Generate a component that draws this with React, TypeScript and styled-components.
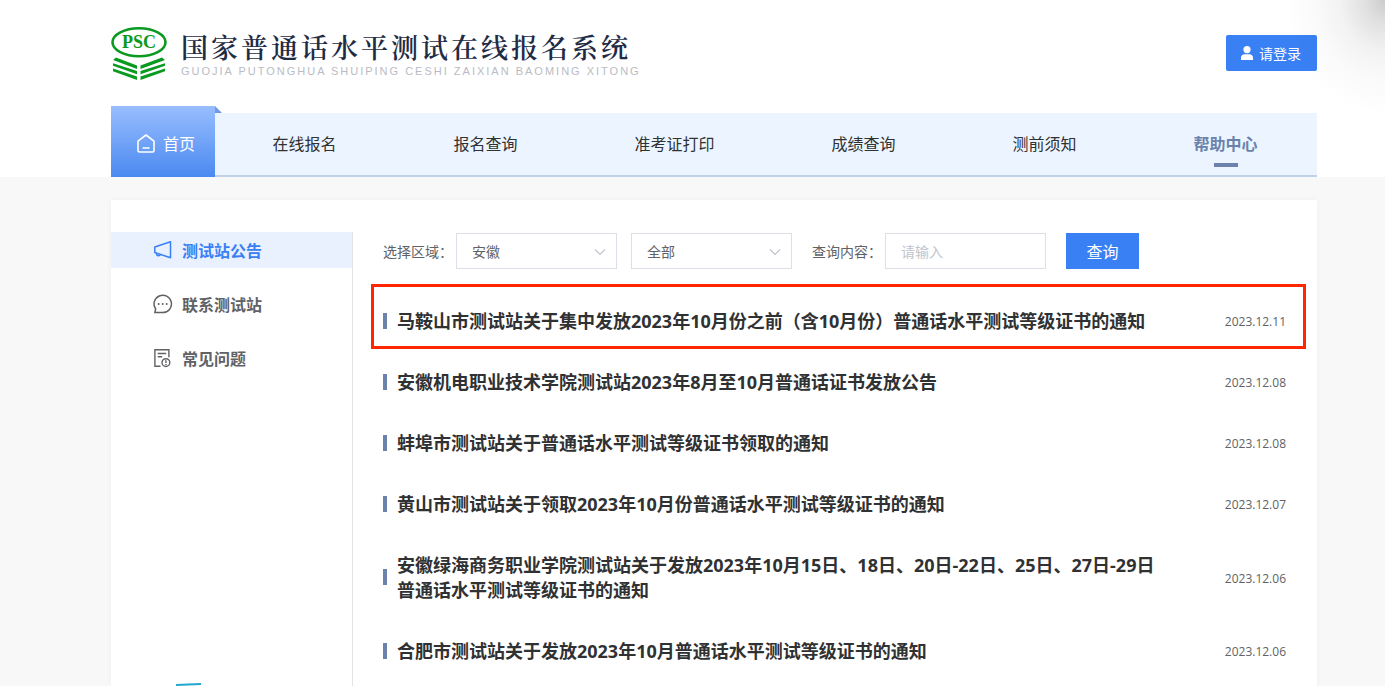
import React from "react";
import styled, { createGlobalStyle, css } from "styled-components";

const GlobalStyle = createGlobalStyle`
  *, *::before, *::after { box-sizing: border-box; }
  body {
    margin: 0;
    background: #f8f8f8;
    color: #303133;
    font-family: "Open Sans", "Noto Sans CJK SC", sans-serif;
    font-size: 14px;
  }
  button, input, select { font: inherit; }
`;

const Page = styled.div`
  position: relative;
  min-height: 100vh;
  display: flex;
  flex-direction: column;
`;

const Header = styled.header`
  padding: 26px 68px 0 111px;
  background: #fff;
`;

const HeaderTop = styled.div`
  display: flex;
  justify-content: space-between;
  align-items: flex-start;
  height: 80px;
`;

const Brand = styled.a`
  display: flex;
  gap: 14px;
  color: #1f2c45;
  text-decoration: none;
`;

const BrandText = styled.div`
  padding-top: 3px;
`;

const BrandTitle = styled.h1`
  margin: 0;
  font-family: "Noto Serif CJK SC", "Noto Sans CJK SC", serif;
  font-size: 27px;
  font-weight: 600;
  line-height: 36px;
  letter-spacing: 3px;
  white-space: nowrap;
`;

const BrandSub = styled.p`
  margin: 0;
  color: #b9bcc4;
  font-family: "Liberation Sans", Arial, sans-serif;
  font-size: 11px;
  line-height: 12px;
  letter-spacing: 2px;
  white-space: nowrap;
`;

const LoginButton = styled.button`
  display: flex;
  align-items: center;
  justify-content: center;
  gap: 6px;
  width: 91px;
  height: 36px;
  margin-top: 9px;
  padding: 0 1px 1px 0;
  border: 0;
  border-radius: 2px;
  background: #3980f4;
  color: #fff;
  cursor: pointer;
`;

const CornerShade = styled.div`
  position: absolute;
  top: 0;
  right: 0;
  width: 110px;
  height: 120px;
  pointer-events: none;
  background: radial-gradient(
    100px 115px at 100% 0,
    rgba(0, 0, 0, 0.2),
    rgba(0, 0, 0, 0.12) 20%,
    rgba(0, 0, 0, 0.05) 45%,
    rgba(0, 0, 0, 0.02) 70%,
    rgba(0, 0, 0, 0) 100%
  );
`;

const Nav = styled.nav`
  display: flex;
  align-items: flex-end;
`;

const HomeTab = styled.a`
  position: relative;
  display: flex;
  align-items: center;
  justify-content: center;
  gap: 8px;
  width: 104px;
  height: 71px;
  padding: 3px 0 0 6px;
  background: linear-gradient(#98beff, #4b89f0);
  color: #fff;
  font-size: 16px;
  text-decoration: none;

  &::after {
    content: "";
    position: absolute;
    top: 0;
    left: 100%;
    border-left: 7px solid #6f9be4;
    border-top: 7px solid transparent;
  }
`;

const NavList = styled.div`
  flex: 1;
  display: flex;
  height: 64px;
  border-bottom: 2px solid #bfd2e9;
  background: #ecf5ff;
`;

const NavLink = styled.a<{ $active?: boolean }>`
  position: relative;
  flex: 1 1 auto;
  display: flex;
  align-items: center;
  justify-content: center;
  padding: 0 2px 2px 0;
  color: #303133;
  font-size: 16px;
  text-decoration: none;

  ${(p) =>
    p.$active &&
    css`
      color: #6b82ac;
      font-weight: 700;

      &::after {
        content: "";
        position: absolute;
        bottom: 8px;
        width: 24px;
        height: 4px;
        background: #6b82ac;
      }
    `}
`;

const Panel = styled.main`
  flex: 1;
  display: flex;
  margin: 23px 68px 0 111px;
  padding-top: 32px;
  background: #fff;
  box-shadow: 0 0 6px rgba(0, 0, 0, 0.04);
`;

const Sidebar = styled.aside`
  display: flex;
  flex-direction: column;
  gap: 18px;
  flex: 0 0 242px;
  border-right: 1px solid #e4e4e4;
`;

const SideLink = styled.a<{ $active?: boolean }>`
  display: flex;
  align-items: center;
  gap: 9px;
  height: 36px;
  padding-left: 42px;
  background: ${(p) => (p.$active ? "#e9f1fe" : "transparent")};
  color: ${(p) => (p.$active ? "#3980f4" : "#606266")};
  font-size: 16px;
  font-weight: 700;
  text-decoration: none;
`;

const Content = styled.section`
  flex: 1;
  min-width: 0;
  padding: 1px 31px 0 30px;
`;

const Filters = styled.form`
  display: flex;
  align-items: center;
  gap: 20px;
`;

const FieldGroup = styled.div`
  display: flex;
  align-items: center;
  gap: 14px;
`;

const Field = styled.div`
  display: flex;
  align-items: center;
  gap: 3px;
`;

const Label = styled.label`
  color: #606266;
  white-space: nowrap;
`;

const SelectWrap = styled.div`
  position: relative;

  svg {
    position: absolute;
    top: 14px;
    right: 11px;
    pointer-events: none;
  }
`;

const control = css`
  display: block;
  width: 161px;
  height: 36px;
  padding: 0 15px;
  border: 1px solid #dcdfe6;
  border-radius: 0;
  background: #fff;
  color: #606266;
  outline: none;
`;

const Select = styled.select`
  ${control}
  appearance: none;
`;

const Input = styled.input`
  ${control}
  &::placeholder { color: #c0c4cc; }
`;

const SearchButton = styled.button`
  width: 73px;
  height: 36px;
  padding: 0 0 1px;
  border: 0;
  background: #3980f4;
  color: #fff;
  font-size: 16px;
  cursor: pointer;
`;

const NoticeList = styled.ul`
  margin: 22px 0 0;
  padding: 0;
  list-style: none;
`;

const Notice = styled.li<{ $marked?: boolean }>`
  position: relative;
  display: flex;
  align-items: center;
  padding: 18px 0;

  &::before {
    content: "";
    flex: none;
    width: 4px;
    height: 16px;
    margin: 0 10px 2px 0;
    background: #6b82ac;
  }

  ${(p) =>
    p.$marked &&
    css`
      &::after {
        content: "";
        position: absolute;
        inset: -7px -20px 3px -12px;
        border: 3px solid #ff2600;
        pointer-events: none;
      }
    `}
`;

const NoticeTitle = styled.a`
  flex: 1;
  padding-right: 56px;
  color: #303133;
  font-size: 18px;
  font-weight: 700;
  line-height: 25px;
  text-decoration: none;
`;

const NoticeDate = styled.time`
  flex: none;
  color: #606266;
  font-size: 12px;
`;

const FloatingArt = styled.svg`
  position: fixed;
  left: 176px;
  bottom: 0;
`;

const Logo = () => (
  <svg width="56" height="54" viewBox="0 0 56 54" aria-label="PSC" role="img">
    <ellipse cx="28" cy="16.300" rx="26.500" ry="14" fill="none" stroke="#0a9a20" strokeWidth="2.600" />
    <text x="28" y="22" textAnchor="middle" fontFamily="Liberation Serif, serif" fontWeight="700" fontSize="18" fill="#0a9a20">
      PSC
    </text>
    <path
      d="M5 31.500 26 39.500v3.500L2 34zM2 37.200 26 45v3.300L2 39.800zM2 42.500 26 50.500V54L2 45.200zM51 31.500 29.500 39.500v3.500L54 34zM54 37.200 29.500 45v3.300L54 39.800zM54 42.500 29.500 50.500V54L54 45.200z"
      fill="#0a9a20"
    />
  </svg>
);

const UserIcon = () => (
  <svg width="12" height="14" viewBox="0 0 12 14" fill="#fff" aria-hidden="true">
    <circle cx="6" cy="3.600" r="3.600" />
    <path d="M0 14v-2.200C0 9.600 1.600 8.300 3.600 8.300h4.800c2 0 3.600 1.300 3.600 3.500V14z" />
  </svg>
);

const HomeIcon = () => (
  <svg width="18" height="19" viewBox="0 0 18 19" fill="none" stroke="#fff" strokeWidth="1.600" strokeLinejoin="round" strokeLinecap="round" aria-hidden="true">
    <path d="M1 7.200 9 1l8 6.200V16.500a1.500 1.500 0 0 1-1.500 1.500h-13A1.500 1.500 0 0 1 1 16.500z" />
    <path d="M6 14h6" />
  </svg>
);

const HornIcon = () => (
  <svg width="20" height="20" viewBox="0 0 20 20" fill="none" stroke="currentColor" strokeWidth="1.500" strokeLinejoin="round" aria-hidden="true">
    <path d="M1.800 7 17.500 1.800v16L1.800 12.500z" />
    <path d="M3.500 13.200c0 2 .8 2.600 1.900 2.600s1.800-.7 1.800-1.500" />
  </svg>
);

const ChatIcon = () => (
  <svg width="20" height="20" viewBox="0 0 20 20" fill="none" stroke="currentColor" strokeWidth="1.500" aria-hidden="true">
    <path d="M9.700 18.600A8.700 8.700 0 1 0 2.700 15L1.800 18.600z" strokeLinejoin="round" />
    <g fill="currentColor" stroke="none">
      <circle cx="5.700" cy="9.900" r="1" />
      <circle cx="9.700" cy="9.900" r="1" />
      <circle cx="13.700" cy="9.900" r="1" />
    </g>
  </svg>
);

const FaqIcon = () => (
  <svg width="20" height="20" viewBox="0 0 20 20" fill="none" stroke="currentColor" strokeWidth="1.400" aria-hidden="true">
    <path d="M7.500 18.200H1.900V1.700h14v7.500M4.700 5.500h8.500M4.700 8.700h4.500" />
    <circle cx="12.900" cy="14.600" r="3.900" />
    <path d="M12.900 12.300v2.800M12.900 15.900v1.200" />
  </svg>
);

const Chevron = () => (
  <svg width="12" height="10" viewBox="0 0 12 10" fill="none" stroke="#c0c4cc" strokeWidth="1.200" aria-hidden="true">
    <path d="m1 2.500 5 5 5-5" />
  </svg>
);

const navItems = ["在线报名", "报名查询", "准考证打印", "成绩查询", "测前须知", "帮助中心"];

const sideItems = [
  { text: "测试站公告", Icon: HornIcon },
  { text: "联系测试站", Icon: ChatIcon },
  { text: "常见问题", Icon: FaqIcon },
];

const notices = [
  { title: "马鞍山市测试站关于集中发放2023年10月份之前（含10月份）普通话水平测试等级证书的通知", date: "2023.12.11" },
  { title: "安徽机电职业技术学院测试站2023年8月至10月普通话证书发放公告", date: "2023.12.08" },
  { title: "蚌埠市测试站关于普通话水平测试等级证书领取的通知", date: "2023.12.08" },
  { title: "黄山市测试站关于领取2023年10月份普通话水平测试等级证书的通知", date: "2023.12.07" },
  { title: "安徽绿海商务职业学院测试站关于发放2023年10月15日、18日、20日-22日、25日、27日-29日普通话水平测试等级证书的通知", date: "2023.12.06" },
  { title: "合肥市测试站关于发放2023年10月普通话水平测试等级证书的通知", date: "2023.12.06" },
];

export default function App() {
  return (
    <Page lang="zh-CN">
      <GlobalStyle />
      <Header>
        <HeaderTop>
          <Brand href="#">
            <Logo />
            <BrandText>
              <BrandTitle>国家普通话水平测试在线报名系统</BrandTitle>
              <BrandSub>GUOJIA PUTONGHUA SHUIPING CESHI ZAIXIAN BAOMING XITONG</BrandSub>
            </BrandText>
          </Brand>
          <LoginButton type="button">
            <UserIcon />
            请登录
          </LoginButton>
        </HeaderTop>
        <Nav>
          <HomeTab href="#">
            <HomeIcon />
            首页
          </HomeTab>
          <NavList>
            {navItems.map((item) => (
              <NavLink key={item} href="#" $active={item === "帮助中心"}>
                {item}
              </NavLink>
            ))}
          </NavList>
        </Nav>
      </Header>
      <CornerShade />
      <Panel>
        <Sidebar>
          {sideItems.map(({ text, Icon }, i) => (
            <SideLink key={text} href="#" $active={i === 0}>
              <Icon />
              {text}
            </SideLink>
          ))}
        </Sidebar>
        <Content>
          <Filters onSubmit={(e) => e.preventDefault()}>
            <FieldGroup>
              <Field>
                <Label htmlFor="province">选择区域：</Label>
                <SelectWrap>
                  <Select id="province">
                    <option>安徽</option>
                  </Select>
                  <Chevron />
                </SelectWrap>
              </Field>
              <SelectWrap>
                <Select aria-label="测试站">
                  <option>全部</option>
                </Select>
                <Chevron />
              </SelectWrap>
            </FieldGroup>
            <Field>
              <Label htmlFor="keyword">查询内容：</Label>
              <Input id="keyword" type="text" placeholder="请输入" />
            </Field>
            <SearchButton type="submit">查询</SearchButton>
          </Filters>
          <NoticeList>
            {notices.map((n, i) => (
              <Notice key={n.title} $marked={i === 0}>
                <NoticeTitle href="#">{n.title}</NoticeTitle>
                <NoticeDate>{n.date}</NoticeDate>
              </Notice>
            ))}
          </NoticeList>
        </Content>
      </Panel>
      <FloatingArt width="26" height="3" viewBox="0 0 26 3" aria-hidden="true">
        <path d="M0 1 25 0v2L0 3z" fill="#22a7cf" />
      </FloatingArt>
    </Page>
  );
}
